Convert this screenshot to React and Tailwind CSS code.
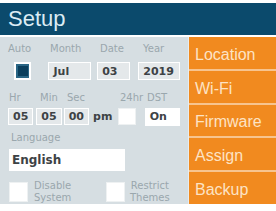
import React from "react";

const dv = { fontFamily: '"DejaVu Sans", "Liberation Sans", sans-serif' };
const ls = { fontFamily: '"Liberation Sans", Arial, sans-serif' };

function Label({ children, className = "" }) {
  return <span className={`block text-[10px] leading-none text-[#9aa7ad] ${className}`}>{children}</span>;
}

function Field({ children, className = "" }) {
  return (
    <div
      className={`flex items-center border border-white bg-[#e4e8ea] px-[4px] text-[11px] font-bold text-[#3d4245] ${className}`}
    >
      {children}
    </div>
  );
}

function Box({ className = "" }) {
  return <div className={`border border-[#eef1f2] bg-white ${className}`} />;
}

const MENU = ["Location", "Wi-Fi", "Firmware", "Assign", "Backup"];

export default function App() {
  return (
    <div className="h-[211px] w-[276px] overflow-hidden bg-white pt-[3px]" style={ls}>
      <header className="flex h-[32px] items-center bg-[#0b4a6c] px-[8px]">
        <h1 className="text-[22px] leading-none text-[#dcecf4]">Setup</h1>
      </header>
      <div className="mt-[2px] flex h-[167px] bg-[#d6dee2] leading-none">
        <div className="w-[188px] flex-none" style={dv}>
          {/* date row */}
          <div className="flex px-[8px] pt-[7px]">
            <Label className="w-[42px]">Auto</Label>
            <Label className="w-[50px]">Month</Label>
            <Label className="w-[43px]">Date</Label>
            <Label>Year</Label>
          </div>
          <div className="mt-[8px] flex h-[18px] items-center px-[8px]">
            <div className="ml-[6px] flex h-[18px] w-[18px] items-center justify-center border-2 border-white bg-[#2a6685]">
              <div className="h-[10px] w-[10px] bg-[#0b3f5d]" />
            </div>
            <Field className="ml-[17px] h-[18px] w-[44px]">Jul</Field>
            <Field className="ml-[6px] h-[18px] w-[34px]">03</Field>
            <Field className="ml-[8px] h-[18px] w-[43px]">2019</Field>
          </div>
          {/* time row */}
          <div className="mt-[13px] flex px-[9px]">
            <Label className="w-[31px]">Hr</Label>
            <Label className="w-[27px]">Min</Label>
            <Label className="w-[53px]">Sec</Label>
            <Label className="w-[27px]">24hr</Label>
            <Label>DST</Label>
          </div>
          <div className="mt-[5px] flex h-[17px] items-center px-[8px]">
            <Field className="h-[17px] w-[27px]">05</Field>
            <Field className="ml-[3px] h-[17px] w-[27px]">05</Field>
            <Field className="ml-[2px] h-[17px] w-[27px]">00</Field>
            <span className="ml-[4px] text-[11px] font-bold text-[#3d4245]">pm</span>
            <Box className="ml-[6px] h-[17px] w-[19px]" />
            <div className="ml-[9px] flex h-[18px] w-[38px] items-center bg-white px-[5px] text-[11px] font-bold text-[#3d4245]">
              On
            </div>
          </div>
          {/* language */}
          <div className="mt-[8px] px-[11px]">
            <Label>Language</Label>
          </div>
          <div className="mt-[6px] px-[9px]">
            <div className="flex h-[22px] w-[116px] items-center bg-white px-[3px] text-[12px] font-bold text-[#3d4245]">
              English
            </div>
          </div>
          {/* toggles */}
          <div className="mt-[9px] flex items-center px-[9px]">
            <Box className="h-[20px] w-[19px]" />
            <div className="ml-[6px] w-[72px]">
              <div className="inline-block text-center text-[10px] leading-[12px] text-[#9aa7ad]">
                Disable
                <br />
                System
              </div>
            </div>
            <Box className="h-[20px] w-[19px]" />
            <div className="ml-[5px] text-center text-[10px] leading-[12px] text-[#9aa7ad]">
              Restrict
              <br />
              Themes
            </div>
          </div>
        </div>
        <div className="w-[1px] flex-none bg-[#e8edef]" />
        <nav className="flex flex-1 flex-col gap-[2px] bg-[#f7c48f]">
          {MENU.map((item) => (
            <button
              key={item}
              type="button"
              className="flex flex-1 items-center bg-[#f18a1f] px-[6px] pt-[4px] text-left text-[16px] leading-none text-[#fde3c4]"
              style={ls}
            >
              {item}
            </button>
          ))}
        </nav>
      </div>
    </div>
  );
}
